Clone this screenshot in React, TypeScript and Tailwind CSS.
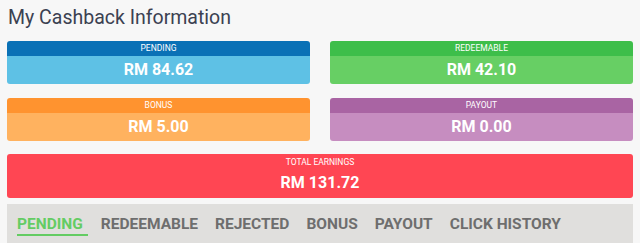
const cards = [
  { label: "PENDING", value: "RM 84.62", head: "bg-[#0a71b6]", body: "bg-[#5ec1e5]" },
  { label: "REDEEMABLE", value: "RM 42.10", head: "bg-[#3dbe4a]", body: "bg-[#67cf64]" },
  { label: "BONUS", value: "RM 5.00", head: "bg-[#ff932f]", body: "bg-[#ffb25f]" },
  { label: "PAYOUT", value: "RM 0.00", head: "bg-[#a964a3]", body: "bg-[#c68dc0]" },
];

const tabs = ["PENDING", "REDEEMABLE", "REJECTED", "BONUS", "PAYOUT", "CLICK HISTORY"];

export default function App() {
  return (
    <div className="min-h-[243px] bg-[#f7f7f7] px-[7px] font-['Roboto',sans-serif]">
      <h1 className="pt-[5px] pl-[1px] text-[19.5px] leading-[25px] text-[#3b4151]">My Cashback Information</h1>
      <div className="mt-[11px] grid grid-cols-2 gap-x-[20px] gap-y-[14px]">
        {cards.map((c) => (
          <StatCard key={c.label} {...c} />
        ))}
      </div>
      <div className="mt-[13px] flex h-[44px] flex-col items-center rounded-[3px] bg-[#ff4653] text-white">
        <div className="pt-[3px] text-[8.5px] leading-[10px]">TOTAL EARNINGS</div>
        <div className="mt-[6px] text-[16px] font-bold leading-[20px]">RM 131.72</div>
      </div>
      <div className="mt-[6px] flex h-[40px] gap-[17px] bg-[#e0dfdd] px-[10px] pt-[11px]">
        {tabs.map((t, i) => (
          <div
            key={t}
            className={
              i === 0
                ? "mr-[-4px] h-[21px] border-b-2 border-[#64cc63] pr-[5px] text-[15.5px] font-bold leading-[18px] text-[#64cc63]"
                : "text-[15.5px] font-bold leading-[18px] text-[#6e6e6e]"
            }
          >
            {t}
          </div>
        ))}
      </div>
    </div>
  );
}

function StatCard({ label, value, head, body }: { label: string; value: string; head: string; body: string }) {
  return (
    <div className="overflow-hidden rounded-[3px] text-white">
      <div className={`${head} h-[15px] text-center text-[8.5px] leading-[15px]`}>{label}</div>
      <div className={`${body} h-[28px] text-center text-[16px] font-bold leading-[28px]`}>{value}</div>
    </div>
  );
}
